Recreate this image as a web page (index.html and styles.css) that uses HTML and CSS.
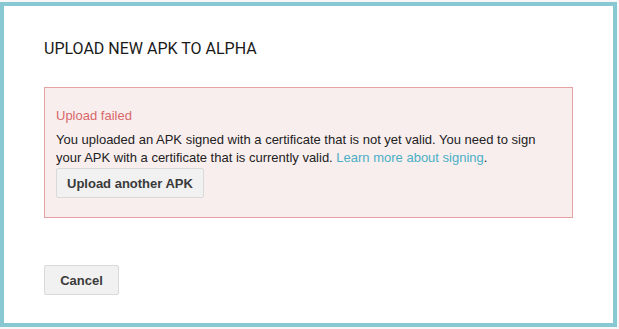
FILE: index.html
```html
<!DOCTYPE html>
<html lang="en">
<head>
    <meta charset="UTF-8">
    <meta name="viewport" content="width=device-width, initial-scale=1.0">
    <title>Upload new APK to Alpha</title>
    <link rel="stylesheet" href="styles.css">
</head>
<body>
    <div class="backdrop">
        <div class="dialog">
            <h2 class="dialog-title">UPLOAD NEW APK TO ALPHA</h2>

            <div class="error-box">
                <div class="error-title">Upload failed</div>
                <p class="error-text">
                    You uploaded an APK signed with a certificate that is not yet valid. You need to sign
                    your APK with a certificate that is currently valid. <a href="#" class="error-link">Learn more about signing</a>.
                </p>
                <button class="btn">Upload another APK</button>
            </div>

            <div class="dialog-actions">
                <button class="btn btn-cancel">Cancel</button>
            </div>
        </div>
    </div>
</body>
</html>
```

FILE: styles.css
```css
body {
    margin: 0;
    padding: 0;
    background: #fff;
    font-family: 'Liberation Sans', Arial, sans-serif;
}
.backdrop {
    width: 619px;
    height: 329px;
    padding-top: 2px;
    box-sizing: border-box;
    background: #f7f7f7;
}
.dialog {
    width: 617px;
    height: 325px;
    box-sizing: border-box;
    border: 4px solid #88c8d3;
    background: #fff;
    padding: 33px 40px 0 40px;
}
.dialog-title {
    margin: 0 0 29px 0;
    font-family: Roboto, 'Liberation Sans', sans-serif;
    font-size: 16px;
    font-weight: 400;
    line-height: 19px;
    color: #1a1a1a;
}
.error-box {
    width: 529px;
    box-sizing: border-box;
    border: 1px solid #e6a2a2;
    background: #f9eeee;
    padding: 19px 11px 19px 11px;
}
.error-title {
    font-size: 13px;
    line-height: 18px;
    color: #d8676a;
}
.error-text {
    margin: 6px 0 1px 0;
    font-size: 13px;
    line-height: 18px;
    color: #222;
}
.error-link {
    color: #4aafc6;
    text-decoration: none;
}
.btn {
    height: 30px;
    padding: 0 10px;
    border: 1px solid #d9d9d9;
    border-radius: 2px;
    background: #f1f1f1;
    font-family: 'Liberation Sans', Arial, sans-serif;
    font-size: 13px;
    font-weight: 700;
    color: #3a3a3a;
    cursor: pointer;
}
.dialog-actions {
    margin-top: 47px;
}
.btn-cancel {
    width: 75px;
    padding: 0;
}
```
